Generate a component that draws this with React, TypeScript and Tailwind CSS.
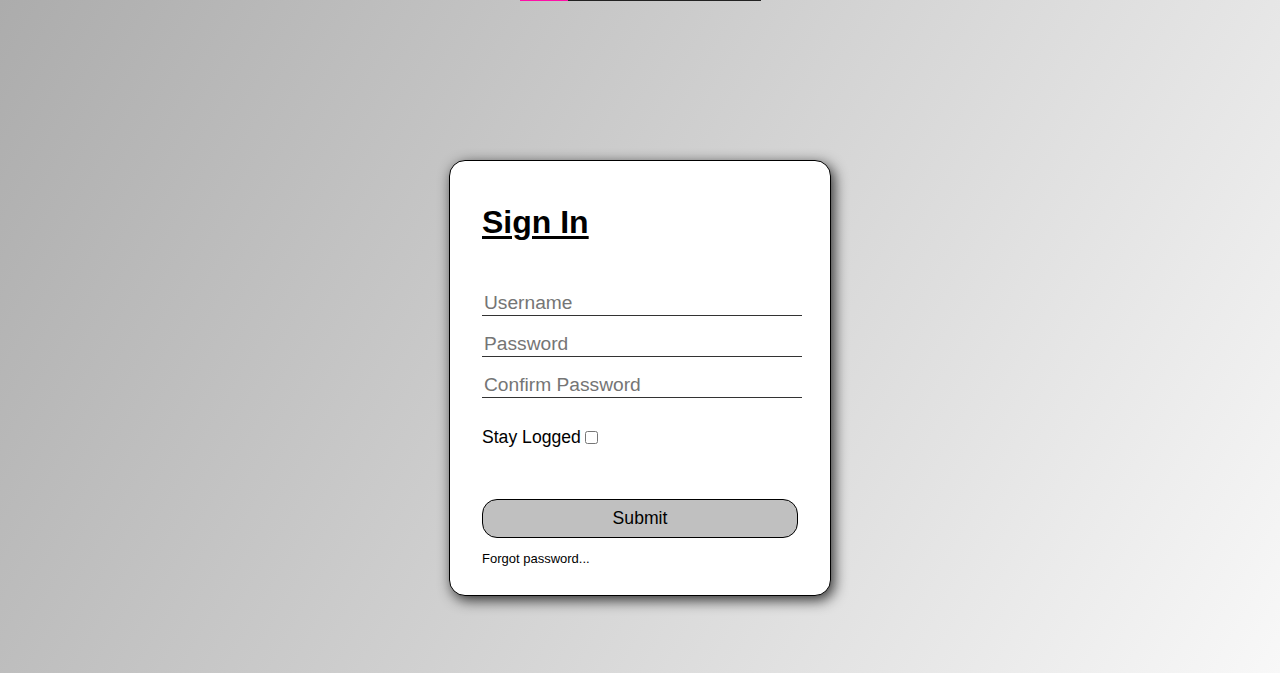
import React from 'react';

const App = () => {
  return (
    <div
      className="min-h-screen w-full bg-[linear-gradient(120deg,#acacac,#f8f8f8)] font-['Liberation_Sans',Arial,sans-serif] text-black"
    >
      {/* loading bar at the very top */}
      <div className="flex justify-center">
        <div className="flex h-px w-[241px] bg-[#222222]">
          <div className="h-px w-[48px] bg-[#ff0fa8]"></div>
        </div>
      </div>

      <div className="flex justify-center pt-[159px]">
        <form
          className="flex w-[382px] flex-col rounded-2xl border border-black bg-white pt-[43px] pb-[29px] pl-[32px] shadow-[3px_4px_14px_rgba(0,0,0,0.8)]"
          onSubmit={(e) => e.preventDefault()}
        >
          <h1 className="m-0 text-[32px] leading-[36px] font-bold underline underline-offset-[3px] decoration-[3px]">
            Sign In
          </h1>

          <div className="mt-[51px] flex flex-col gap-[16px]">
            <input
              type="text"
              placeholder="Username"
              className="w-[320px] border-b border-[#333333] px-[2px] py-px text-[19.2px] leading-[22px] outline-none placeholder:text-[#757575]"
            />
            <input
              type="password"
              placeholder="Password"
              className="w-[320px] border-b border-[#333333] px-[2px] py-px text-[19.2px] leading-[22px] outline-none placeholder:text-[#757575]"
            />
            <input
              type="password"
              placeholder="Confirm Password"
              className="w-[320px] border-b border-[#333333] px-[2px] py-px text-[19.2px] leading-[22px] outline-none placeholder:text-[#757575]"
            />
          </div>

          <label className="mt-[29px] flex items-center text-[17.6px] leading-[20px]">
            Stay Logged
            <input type="checkbox" className="ml-[4px] h-[13px] w-[13px]" />
          </label>

          <button
            type="submit"
            className="mt-[52px] h-[39px] w-[316px] rounded-[15px] border border-black bg-[#c0c0c0] text-[17.6px]"
          >
            Submit
          </button>

          <a href="#" className="mt-[13px] text-[13px] leading-[15px] text-black">
            Forgot password...
          </a>
        </form>
      </div>
    </div>
  );
};

export default App;
